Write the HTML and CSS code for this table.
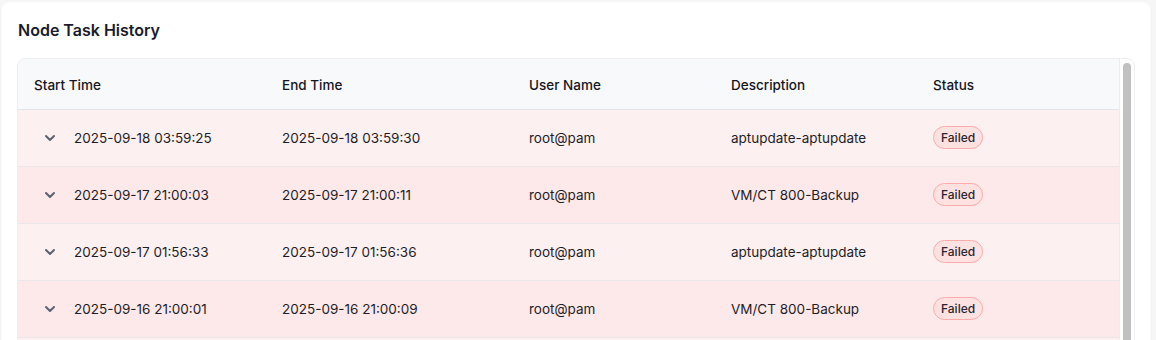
FILE: index.html
```html
<!DOCTYPE html>
<html>
<head>
<meta charset="utf-8">
<link rel="stylesheet" href="styles.css">
</head>
<body>
<div class="card">
  <h2 class="title">Node Task History</h2>
  <div class="table-wrap">
    <div class="table-area">
      <table class="tasks">
        <colgroup>
          <col class="c1"><col class="c2"><col class="c3"><col class="c4"><col>
        </colgroup>
        <thead>
          <tr><th>Start Time</th><th>End Time</th><th>User Name</th><th>Description</th><th>Status</th></tr>
        </thead>
        <tbody>
          <tr class="odd">
            <td><div class="start"><svg class="chev" viewBox="0 0 16 16" width="16" height="16"><path d="M4 6l4 4 4-4" fill="none" stroke="#5b6270" stroke-width="2" stroke-linecap="round" stroke-linejoin="round"/></svg><span>2025-09-18 03:59:25</span></div></td>
            <td>2025-09-18 03:59:30</td><td>root@pam</td><td>aptupdate-aptupdate</td>
            <td><span class="badge">Failed</span></td>
          </tr>
          <tr class="even">
            <td><div class="start"><svg class="chev" viewBox="0 0 16 16" width="16" height="16"><path d="M4 6l4 4 4-4" fill="none" stroke="#5b6270" stroke-width="2" stroke-linecap="round" stroke-linejoin="round"/></svg><span>2025-09-17 21:00:03</span></div></td>
            <td>2025-09-17 21:00:11</td><td>root@pam</td><td>VM/CT 800-Backup</td>
            <td><span class="badge">Failed</span></td>
          </tr>
          <tr class="odd">
            <td><div class="start"><svg class="chev" viewBox="0 0 16 16" width="16" height="16"><path d="M4 6l4 4 4-4" fill="none" stroke="#5b6270" stroke-width="2" stroke-linecap="round" stroke-linejoin="round"/></svg><span>2025-09-17 01:56:33</span></div></td>
            <td>2025-09-17 01:56:36</td><td>root@pam</td><td>aptupdate-aptupdate</td>
            <td><span class="badge">Failed</span></td>
          </tr>
          <tr class="even">
            <td><div class="start"><svg class="chev" viewBox="0 0 16 16" width="16" height="16"><path d="M4 6l4 4 4-4" fill="none" stroke="#5b6270" stroke-width="2" stroke-linecap="round" stroke-linejoin="round"/></svg><span>2025-09-16 21:00:01</span></div></td>
            <td>2025-09-16 21:00:09</td><td>root@pam</td><td>VM/CT 800-Backup</td>
            <td><span class="badge">Failed</span></td>
          </tr>
        </tbody>
      </table>
    </div>
    <div class="scrollbar"><div class="thumb"></div></div>
  </div>
</div>
</body>
</html>
```
FILE: styles.css
```css
html, body {
  margin: 0;
  padding: 0;
  overflow: hidden;
  background: #f6f6f7;
  font-family: Inter, "Noto Sans", sans-serif;
}
body {
  padding: 2px 6px 0 2px;
}
.card {
  background: #ffffff;
  border-radius: 8px;
  padding: 16px 15px 16px 15px;
  height: 400px;
}
.title {
  margin: 0 0 16px 1px;
  font-size: 16px;
  line-height: 24px;
  font-weight: 600;
  color: #1a1b2b;
}
.table-wrap {
  display: flex;
  border: 1px solid #eceef1;
  border-radius: 8px 8px 0 0;
  height: 380px;
  overflow: hidden;
  background: #fdf0f0;
}
.table-area {
  flex: 1;
  min-width: 0;
}
.scrollbar {
  flex: none;
  width: 15px;
  background: #ffffff;
  border-left: 1px solid #ececec;
  padding: 4px 3px 0 3px;
  box-sizing: border-box;
}
.thumb {
  width: 8px;
  height: 500px;
  background: #c1c1c1;
  border-radius: 4px;
}
.tasks {
  width: 100%;
  border-collapse: collapse;
  table-layout: fixed;
}
.c1 { width: 248px; }
.c2 { width: 247px; }
.c3 { width: 202px; }
.c4 { width: 202px; }
.tasks th {
  height: 50px;
  padding: 2px 0 0 16px;
  background: #f8f9fb;
  border-bottom: 1px solid #e2e4e8;
  text-align: left;
  font-size: 13.5px;
  font-weight: 500;
  color: #15161f;
  box-sizing: border-box;
}
.tasks td {
  height: 57px;
  padding: 0 0 0 16px;
  font-size: 13.5px;
  color: #1d1e28;
  border-bottom: 1px solid #eae6ea;
  box-sizing: border-box;
}
.tasks tr.odd td { background: #fdf0f0; }
.tasks tr.even td { background: #fde9e9; }
.start {
  display: flex;
  align-items: center;
}
.chev {
  margin-left: 8px;
  margin-right: 16px;
  flex: none;
}
.badge {
  display: inline-block;
  padding: 0 7px;
  height: 23px;
  line-height: 21px;
  box-sizing: border-box;
  border: 1px solid #fcaaaa;
  background: #fee2e2;
  border-radius: 12px;
  font-size: 12px;
  font-weight: 500;
  color: #2b2530;
}
```
